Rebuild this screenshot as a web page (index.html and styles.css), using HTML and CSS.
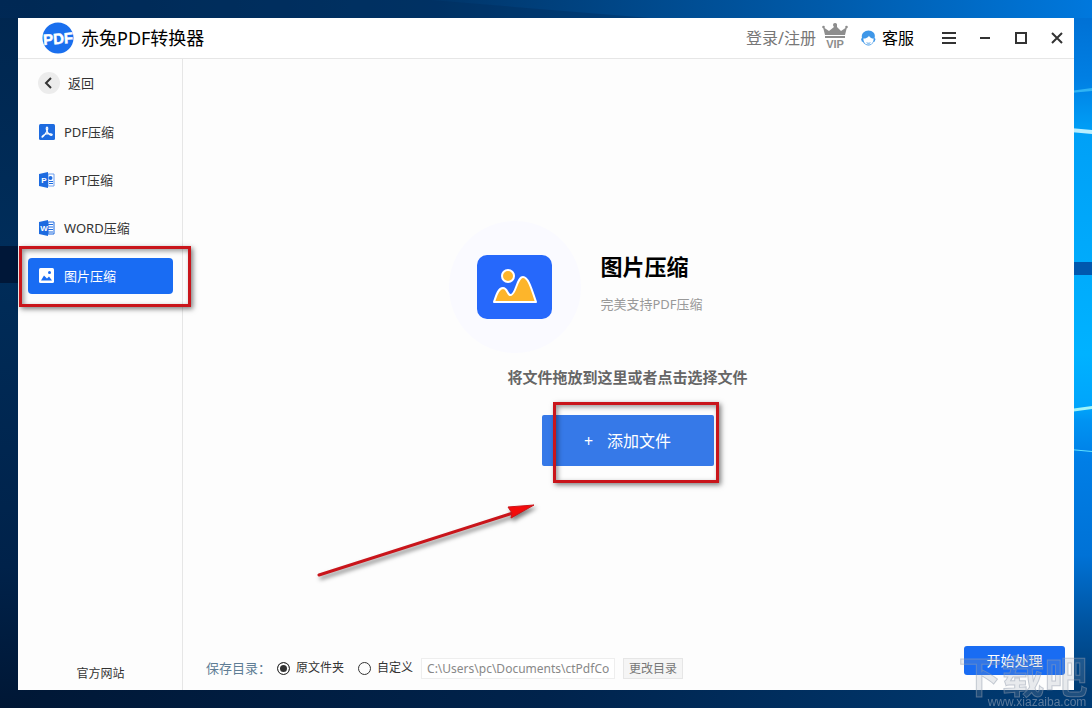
FILE: index.html
```html
<!DOCTYPE html>
<html lang="zh-CN">
<head>
    <meta charset="UTF-8">
    <meta name="viewport" content="width=device-width, initial-scale=1.0">
    <title>赤兔PDF转换器</title>
    <link rel="stylesheet" href="styles.css">
</head>
<body>
    <!-- desktop wallpaper -->
    <svg class="wallpaper" viewBox="0 0 1092 708" preserveAspectRatio="none" aria-hidden="true">
        <defs>
            <linearGradient id="top"><stop offset="0" stop-color="#00264f"/><stop offset=".4" stop-color="#003569"/><stop offset=".75" stop-color="#005aa9"/><stop offset="1" stop-color="#0078dd"/></linearGradient>
            <linearGradient id="bottom"><stop offset="0" stop-color="#001735"/><stop offset=".5" stop-color="#00234c"/><stop offset="1" stop-color="#003c75"/></linearGradient>
            <linearGradient id="right" x1="0" y1="0" x2="0" y2="1"><stop offset="0" stop-color="#0071d5"/><stop offset=".09" stop-color="#007fe3"/><stop offset=".17" stop-color="#00a0f7"/><stop offset=".5" stop-color="#00b2ff"/><stop offset=".58" stop-color="#00a4fb"/><stop offset=".6" stop-color="#0093f2"/><stop offset=".66" stop-color="#007ee6"/><stop offset=".8" stop-color="#0072d6"/><stop offset=".9" stop-color="#0054a0"/><stop offset="1" stop-color="#003b73"/></linearGradient>
            <linearGradient id="left" x1="0" y1="0" x2="0" y2="1"><stop offset="0" stop-color="#00264f"/><stop offset=".35" stop-color="#002d5a"/><stop offset=".8" stop-color="#00224a"/><stop offset="1" stop-color="#001735"/></linearGradient>
        </defs>
        <rect width="1092" height="360" fill="url(#top)"/>
        <rect y="360" width="1092" height="348" fill="url(#bottom)"/>
        <rect width="30" height="708" fill="url(#left)"/>
        <rect y="246" width="30" height="37" fill="#001738"/>
        <path d="M0 0h430l220 18H0z" fill="#002d5c" opacity=".4"/>
        <rect x="1070" y="18" width="22" height="672" fill="url(#right)"/>
        <path d="M1070 91l22-3v3l-22 2z" fill="#2fb4f4"/>
        <path d="M1070 128l22 2v4l-22-2z" fill="#b9efff"/>
        <path d="M1070 262h22v13h-22z" fill="#0058ae"/>
        <path d="M1070 409l22-3v3l-22 3z" fill="#a0f4f8"/>
        <path d="M1070 449l22 2v1l-22-2z" fill="#5fe0ff"/>
    </svg>

    <div class="window">
        <header class="titlebar">
            <svg class="logo" viewBox="0 0 32 32" role="img" aria-label="PDF">
                <circle cx="16" cy="16" r="15.5" fill="#1a6fee"/>
                <text x="16" y="22" text-anchor="middle" transform="rotate(-4 16 16)">PDF</text>
            </svg>
            <h1>赤兔PDF转换器</h1>
            <a class="login" href="#">登录/注册</a>
            <svg class="vip" viewBox="0 0 26 26" role="img" aria-label="VIP">
                <path d="M3 12L1 4l6 4 5-4V2a1 1 0 0 1 3 0v2l4 4 6-4-2 8zM3 13h20v2H3z" fill="#8d8d8d"/>
                <circle cx="1.500" cy="4" r="1.300" fill="#8d8d8d"/><circle cx="24.500" cy="4" r="1.300" fill="#8d8d8d"/><circle cx="13" cy="2" r="2" fill="#8d8d8d"/>
                <text x="13" y="25" text-anchor="middle">VIP</text>
            </svg>
            <a class="service" href="#">
                <svg viewBox="0 0 16 16" aria-hidden="true">
                    <path d="M1 8C0 3 4 0 8 0s8 3 6.500 8l1 1-1 3h-1c-1 2-3 4-5.500 4S3 14 2 12H1L0 9z" fill="#3f97e8"/>
                    <path d="M2.500 8.500c3 0 5-1 6-3 1 2 2.500 3 5 3 0 4-2 6.500-5.500 6.500S2.500 12.500 2.500 8.500z" fill="#fff"/>
                    <path d="M6 13c1 .8 3 .8 4 0" fill="none" stroke="#3f97e8"/>
                </svg>
                客服
            </a>
            <div class="controls">
                <button type="button" aria-label="菜单"><svg viewBox="0 0 14 14"><path d="M0 2h14M0 7h14M0 12h14"/></svg></button>
                <button type="button" aria-label="最小化"><svg viewBox="0 0 14 14"><path d="M2 7h10"/></svg></button>
                <button type="button" aria-label="最大化"><svg viewBox="0 0 14 14"><path d="M2 2h10v10H2z"/></svg></button>
                <button type="button" aria-label="关闭"><svg viewBox="0 0 14 14"><path d="M2 2l10 10M12 2L2 12"/></svg></button>
            </div>
        </header>

        <div class="body">
            <aside class="sidebar">
                <button class="back" type="button">
                    <svg viewBox="0 0 22 22" aria-hidden="true"><circle cx="11" cy="11" r="11" fill="#ececec"/><path d="M13 6l-5 5 5 5" fill="none" stroke="#333" stroke-width="2"/></svg>
                    返回
                </button>
                <nav>
                    <a href="#">
                        <svg viewBox="0 0 16 16" aria-hidden="true"><rect width="16" height="16" rx="1.500" fill="#1d6be0"/><path d="M8 3c-1 0-1 2 0 4 1 3 4 5 5 4s-3-2-6-1-4 2-4 3 3-2 5-6c1-2 1-4 0-4z" fill="none" stroke="#fff" stroke-width="1.200"/></svg>
                        PDF压缩
                    </a>
                    <a href="#">
                        <svg viewBox="0 0 16 16" aria-hidden="true"><path d="M9 2h6v12H9z" fill="#fff" stroke="#6f9fee"/><circle cx="11.500" cy="6" r="2" fill="#1d6be0"/><path d="M10 9.500h4M10 11.500h4" stroke="#1d6be0"/><path d="M0 2l9-2v16l-9-2z" fill="#1d6be0"/><text x="5" y="11" text-anchor="middle">P</text></svg>
                        PPT压缩
                    </a>
                    <a href="#">
                        <svg viewBox="0 0 16 16" aria-hidden="true"><path d="M9 2h6v12H9z" fill="#fff" stroke="#1d6be0"/><path d="M9 4.500h5M9 7h5M9 9.500h5M9 12h5" stroke="#1d6be0"/><path d="M0 2l9-2v16l-9-2z" fill="#1d6be0"/><text x="5" y="11" text-anchor="middle">W</text></svg>
                        WORD压缩
                    </a>
                    <a class="active" href="#" aria-current="page">
                        <svg viewBox="0 0 16 16" aria-hidden="true"><rect y="0" width="15" height="15" rx="1.500" fill="#fff"/><path d="M2 12.500l3-5 3 3 2-2 3 4z" fill="#196cf3"/><circle cx="10.500" cy="4.500" r="1.500" fill="#196cf3"/></svg>
                        图片压缩
                        <span class="mark"></span>
                    </a>
                </nav>
                <a class="website" href="#">官方网站</a>
            </aside>

            <main>
                <section class="stage">
                    <div class="hero">
                        <svg viewBox="0 0 132 132" aria-hidden="true">
                            <circle cx="66" cy="66" r="66" fill="#fafaff"/>
                            <rect x="28" y="34" width="75" height="64" rx="10" fill="#2668fb"/>
                            <g fill="#fdb52b" stroke="#fff" stroke-width="2" stroke-linejoin="round">
                                <circle cx="59" cy="55" r="6"/>
                                <path d="M45 81c2-6 4-14 9-14s4 8 8 7c5-1 6-18 12-18 5 0 8 10 13 25z"/>
                            </g>
                        </svg>
                        <div class="hero-text">
                            <h2>图片压缩</h2>
                            <p>完美支持PDF压缩</p>
                        </div>
                    </div>
                    <p class="hint">将文件拖放到这里或者点击选择文件</p>
                    <div class="add">
                        <button type="button"><span>+</span>添加文件</button>
                        <span class="mark"></span>
                        <svg class="arrow" viewBox="0 0 220 76" aria-hidden="true">
                            <path d="M2 71L196 9" stroke="#c9151b" stroke-width="3" stroke-linecap="round"/>
                            <path d="M191 3l26-2-23 13 1-5z" fill="#f30b0b" stroke="#c9151b"/>
                        </svg>
                    </div>
                </section>

                <form class="footer">
                    <span class="save">保存目录：</span>
                    <label><input type="radio" name="dir" checked>原文件夹</label>
                    <label><input type="radio" name="dir">自定义</label>
                    <input class="path" type="text" value="C:\Users\pc\Documents\ctPdfConverter" aria-label="保存目录" readonly>
                    <button class="change" type="button">更改目录</button>
                    <button class="start" type="button">开始处理</button>
                </form>
            </main>
        </div>
    </div>

    <svg class="watermark" viewBox="0 0 136 60" aria-hidden="true">
        <text class="big" x="67" y="45" text-anchor="middle">下载吧</text>
        <text class="site" x="81" y="58" text-anchor="middle">www.xiazaiba.com</text>
    </svg>
</body>
</html>
```

FILE: styles.css
```css
*{
    box-sizing: border-box;
}
body{
    margin: 0;
    padding: 18px;
    height: 100vh;
    background-color: #002a55;
    color: #333;
    font-family: "Noto Sans", "Noto Sans CJK SC", sans-serif;
    font-size: 13px;
    line-height: 20px;
}
h1, h2, p{
    margin: 0;
}
a{
    color: inherit;
    text-decoration: none;
}
button{
    border: none;
    padding: 0;
    background: none;
    color: inherit;
    font: inherit;
    cursor: pointer;
}
svg{
    display: block;
    flex-shrink: 0;
}
.wallpaper{
    position: fixed;
    inset: 0;
    width: 100%;
    height: 100%;
}
.window{
    position: relative;
    height: 100%;
    display: flex;
    flex-direction: column;
    background-color: #fdfdfd;
}

/* title bar */
.titlebar{
    display: flex;
    align-items: center;
    height: 41px;
    padding: 0 10px 0 24px;
    border-bottom: 1px solid #e6e6e6;
    background-color: white;
}
.logo{
    width: 32px;
    height: 32px;
}
.logo text{
    fill: white;
    stroke: white;
    stroke-width: 0.5px;
    font: bold 15px "Liberation Sans", sans-serif;
}
h1{
    margin-left: 7px;
    margin-right: auto;
    color: black;
    font-size: 18px;
    font-weight: normal;
}
.login{
    color: #777;
    font-size: 16px;
}
.vip{
    width: 26px;
    height: 26px;
    margin: 0 13px 4px 6px;
}
.vip text{
    fill: #8d8d8d;
    font: bold 11px "Liberation Sans", sans-serif;
}
.service{
    display: flex;
    align-items: center;
    gap: 6px;
    color: black;
    font-size: 16px;
}
.service svg{
    width: 15px;
    height: 16px;
}
.controls{
    display: flex;
    gap: 22px;
    margin-left: 28px;
}
.controls svg{
    width: 14px;
    height: 14px;
    fill: none;
    stroke: #333;
    stroke-width: 2;
}

/* sidebar */
.body{
    flex: 1;
    display: flex;
    min-height: 0;
}
.sidebar{
    width: 165px;
    display: flex;
    flex-direction: column;
    padding: 13px 9px 6px 10px;
    border-right: 1px solid #e6e6e6;
}
.back{
    display: flex;
    align-items: center;
    gap: 8px;
    padding-left: 10px;
}
.back svg{
    width: 22px;
    height: 22px;
}
nav{
    display: flex;
    flex-direction: column;
    gap: 12px;
    margin-top: 20px;
}
nav a{
    position: relative;
    display: flex;
    align-items: center;
    gap: 9px;
    height: 36px;
    padding-left: 11px;
    border-radius: 4px;
}
nav svg{
    width: 16px;
    height: 16px;
}
nav text{
    fill: white;
    font: bold 8px "Liberation Sans", sans-serif;
}
.active{
    background-color: #196cf3;
    color: white;
}
.website{
    margin-top: auto;
    text-align: center;
    font-size: 12px;
}

/* red marks over the buttons */
.mark{
    position: absolute;
    z-index: 1;
    border: 3px solid #c9151b;
    box-shadow: 2px 2px 5px rgba(0, 0, 0, 0.5), inset 2px 2px 5px rgba(0, 0, 0, 0.4);
    pointer-events: none;
}
.active .mark{
    inset: -12px -18px -13px -9px;
}
.add .mark{
    inset: -13px -5px -17px 11px;
}
.arrow{
    position: absolute;
    top: 89px;
    left: -225px;
    width: 220px;
    height: 76px;
    overflow: visible;
    filter: drop-shadow(2px 3px 2px rgba(0, 0, 0, 0.5));
}

/* drop area */
main{
    flex: 1;
    display: flex;
    flex-direction: column;
    min-width: 0;
}
.stage{
    flex: 1;
    display: flex;
    flex-direction: column;
    align-items: center;
    justify-content: center;
    padding: 0 2px 18px 0;
}
.hero{
    display: flex;
    align-items: center;
    gap: 20px;
}
.hero > svg{
    width: 132px;
    height: 132px;
}
.hero-text{
    width: 206px;
    padding-bottom: 10px;
}
h2{
    color: black;
    font-size: 22px;
    line-height: 32px;
}
.hero-text p{
    margin-top: 12px;
    color: #999;
}
.hint{
    margin: 14px 0 28px;
    color: #666;
    font-size: 15px;
    font-weight: bold;
}
.add{
    position: relative;
}
.add button{
    width: 172px;
    height: 51px;
    border-radius: 2px;
    background-color: #3679e8;
    color: white;
    font-size: 16px;
}
.add button span{
    margin-right: 14px;
}

/* save directory */
.footer{
    display: flex;
    align-items: center;
    height: 44px;
    padding: 0 9px 0 23px;
    font-size: 12px;
}
.save{
    margin-right: 6px;
    color: #5f7d95;
    font-size: 13px;
}
.footer label{
    display: flex;
    align-items: center;
    gap: 6px;
    margin-right: 14px;
}
input[type="radio"]{
    appearance: none;
    width: 13px;
    height: 13px;
    margin: 0;
    border: 1px solid #333;
    border-radius: 50%;
}
input[type="radio"]:checked{
    background-color: #333;
    box-shadow: inset 0 0 0 2px white;
}
.path{
    width: 194px;
    height: 21px;
    margin-left: -6px;
    padding: 0 5px;
    border: 1px solid #eee;
    background-color: white;
    color: #888;
    font: inherit;
}
.change{
    width: 60px;
    height: 21px;
    margin-left: 8px;
    border: 1px solid #e6e6e6;
    background-color: #f5f5f5;
    color: #777;
}
.start{
    align-self: flex-start;
    width: 101px;
    height: 29px;
    margin-left: auto;
    border-radius: 3px;
    background-color: #196cf3;
    color: white;
    font-size: 14px;
}

.watermark{
    position: fixed;
    right: 0;
    bottom: 0;
    width: 136px;
    height: 60px;
    pointer-events: none;
}
.big{
    fill: rgba(150, 160, 175, 0.2);
    stroke: rgba(150, 160, 175, 0.5);
    font: bold 43px "Noto Sans CJK SC", sans-serif;
}
.site{
    fill: rgba(130, 150, 175, 0.7);
    font: 12px "Liberation Sans", sans-serif;
}
```
